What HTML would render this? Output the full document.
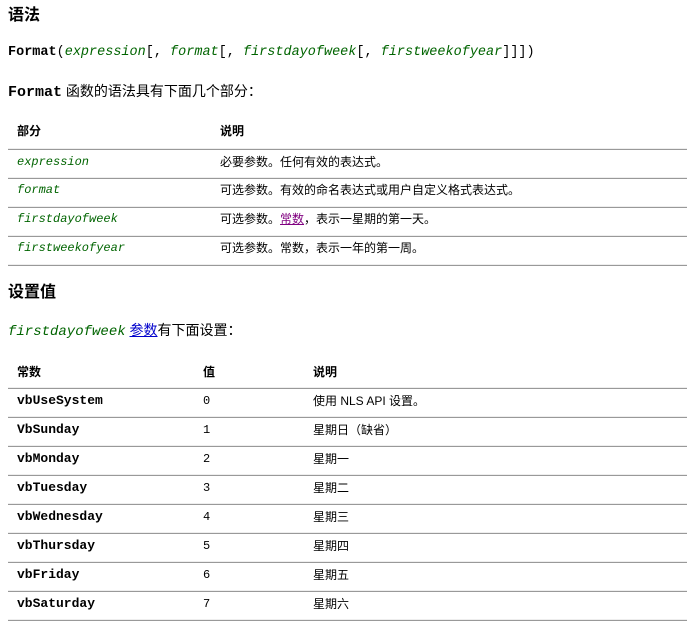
<!DOCTYPE html>
<html><head><meta charset="utf-8"><style>
body{margin:0;width:687px;height:623px;background:#fff;position:relative;font-family:"Liberation Sans","Noto Sans CJK SC",sans-serif;color:#000;overflow:hidden}
.a{position:absolute;white-space:nowrap;line-height:16px}
.h{font-size:16px;font-weight:bold}
.m{font-family:"Liberation Mono","Noto Sans CJK SC",monospace}
.g{color:#006400;font-style:italic;font-family:"Liberation Mono",monospace}
.s{font-size:12px}
.b{font-weight:bold}
.c{font-size:13px}
.ln{position:absolute;left:8px;width:679px;height:1px;background:#999;border-top:1px solid #eee}
a{color:#00c;text-decoration:underline}
</style></head><body>
<div class="a h" style="left:8px;top:8px">语法</div>
<div class="a m" style="left:8px;top:45px;font-size:13.5px"><b>Format</b>(<span class="g">expression</span>[, <span class="g">format</span>[, <span class="g">firstdayofweek</span>[, <span class="g">firstweekofyear</span>]]])</div>
<div class="a" style="left:8px;top:83px;font-size:14px"><b class="m" style="font-size:15px">Format</b> 函数的语法具有下面几个部分：</div>

<div class="a s b" style="left:17px;top:123px">部分</div>
<div class="a s b" style="left:220px;top:123px">说明</div>
<div class="ln" style="top:148px"></div>
<div class="a s g" style="left:17px;top:154px">expression</div>
<div class="a s" style="left:220px;top:154px">必要参数。任何有效的表达式。</div>
<div class="ln" style="top:177px"></div>
<div class="a s g" style="left:17px;top:182px">format</div>
<div class="a s" style="left:220px;top:182px">可选参数。有效的命名表达式或用户自定义格式表达式。</div>
<div class="ln" style="top:206px"></div>
<div class="a s g" style="left:17px;top:211px">firstdayofweek</div>
<div class="a s" style="left:220px;top:211px">可选参数。<a style="color:#800080">常数</a>，表示一星期的第一天。</div>
<div class="ln" style="top:235px"></div>
<div class="a s g" style="left:17px;top:240px">firstweekofyear</div>
<div class="a s" style="left:220px;top:240px">可选参数。常数，表示一年的第一周。</div>
<div class="ln" style="top:264px"></div>

<div class="a h" style="left:8px;top:285px">设置值</div>
<div class="a" style="left:8px;top:322px;font-size:14px"><span class="g">firstdayofweek</span> <a>参数</a>有下面设置：</div>

<div class="a s b" style="left:17px;top:364px">常数</div>
<div class="a s b" style="left:203px;top:364px">值</div>
<div class="a s b" style="left:313px;top:364px">说明</div>
<div class="ln" style="top:387px"></div>
<div class="a c b m" style="left:17px;top:393px">vbUseSystem</div><div class="a s m" style="left:203px;top:393px">0</div><div class="a s" style="left:313px;top:393px">使用 NLS API 设置。</div>
<div class="ln" style="top:416px"></div>
<div class="a c b m" style="left:17px;top:422px">VbSunday</div><div class="a s m" style="left:203px;top:422px">1</div><div class="a s" style="left:313px;top:422px">星期日（缺省）</div>
<div class="ln" style="top:445px"></div>
<div class="a c b m" style="left:17px;top:451px">vbMonday</div><div class="a s m" style="left:203px;top:451px">2</div><div class="a s" style="left:313px;top:451px">星期一</div>
<div class="ln" style="top:474px"></div>
<div class="a c b m" style="left:17px;top:480px">vbTuesday</div><div class="a s m" style="left:203px;top:480px">3</div><div class="a s" style="left:313px;top:480px">星期二</div>
<div class="ln" style="top:503px"></div>
<div class="a c b m" style="left:17px;top:509px">vbWednesday</div><div class="a s m" style="left:203px;top:509px">4</div><div class="a s" style="left:313px;top:509px">星期三</div>
<div class="ln" style="top:532px"></div>
<div class="a c b m" style="left:17px;top:538px">vbThursday</div><div class="a s m" style="left:203px;top:538px">5</div><div class="a s" style="left:313px;top:538px">星期四</div>
<div class="ln" style="top:561px"></div>
<div class="a c b m" style="left:17px;top:567px">vbFriday</div><div class="a s m" style="left:203px;top:567px">6</div><div class="a s" style="left:313px;top:567px">星期五</div>
<div class="ln" style="top:590px"></div>
<div class="a c b m" style="left:17px;top:596px">vbSaturday</div><div class="a s m" style="left:203px;top:596px">7</div><div class="a s" style="left:313px;top:596px">星期六</div>
<div class="ln" style="top:619px"></div>
</body></html>
